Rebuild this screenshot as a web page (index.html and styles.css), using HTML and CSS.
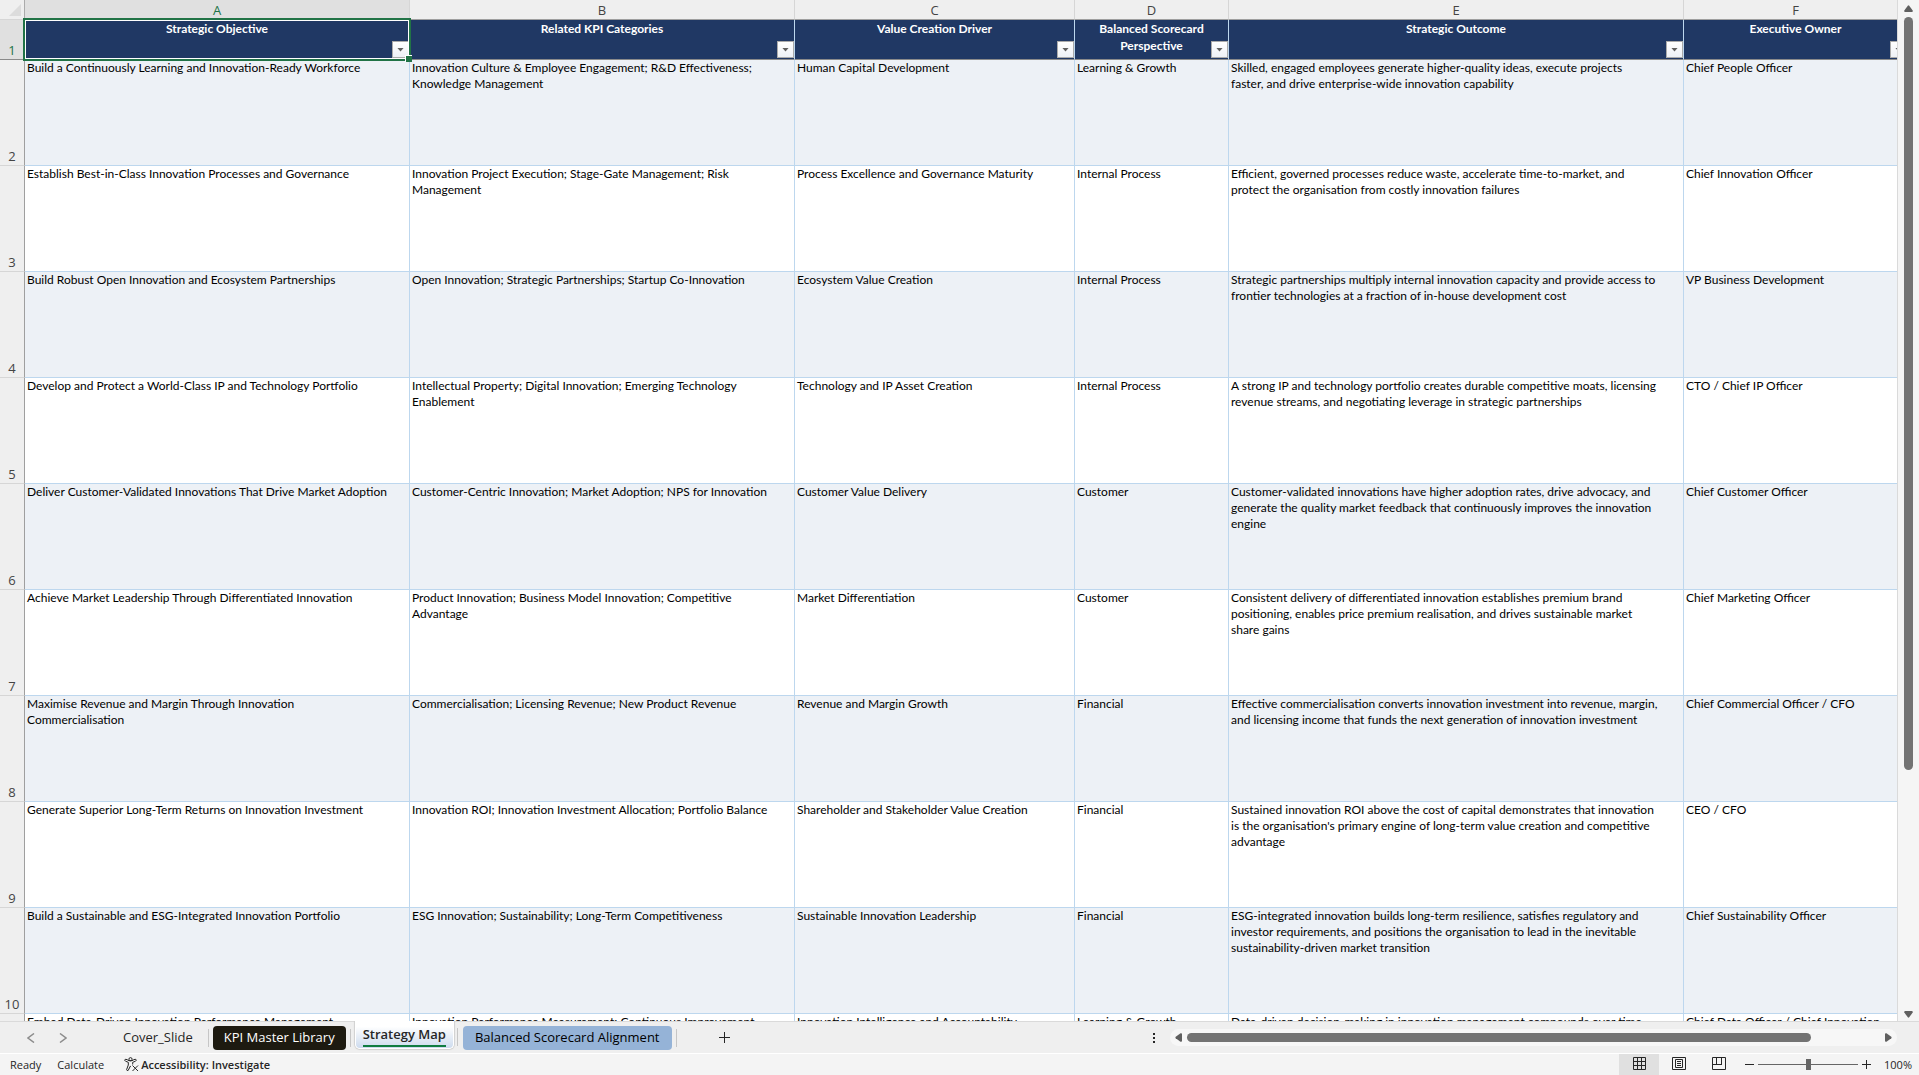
FILE: index.html
```html
<!DOCTYPE html>
<html lang="en">
<head>
<meta charset="utf-8">
<title>Strategy Map</title>
<link rel="stylesheet" href="styles.css">
</head>
<body>
<main class="workspace">
  <div class="sheet">
    <table class="grid">
      <colgroup>
        <col class="w-row"><col class="w-a"><col class="w-b"><col class="w-c"><col class="w-d"><col class="w-e"><col class="w-f">
      </colgroup>
      <thead>
        <tr class="letters">
          <th class="corner"><svg width="12" height="12" viewBox="0 0 12 12" aria-hidden="true"><path d="M12 0V12H0Z" fill="#dcdcdc"/></svg></th>
          <th class="current" scope="col">A</th><th scope="col">B</th><th scope="col">C</th><th scope="col">D</th><th scope="col">E</th><th scope="col">F</th>
        </tr>
        <tr class="titles">
          <th class="num current" scope="row">1</th>
          <th scope="col" class="selected">Strategic Objective<button class="filter" aria-label="Filter Strategic Objective"></button><span class="selection"></span></th>
          <th scope="col">Related KPI Categories<button class="filter" aria-label="Filter Related KPI Categories"></button></th>
          <th scope="col">Value Creation Driver<button class="filter" aria-label="Filter Value Creation Driver"></button></th>
          <th scope="col">Balanced Scorecard<br>Perspective<button class="filter" aria-label="Filter Balanced Scorecard Perspective"></button></th>
          <th scope="col">Strategic Outcome<button class="filter" aria-label="Filter Strategic Outcome"></button></th>
          <th scope="col">Executive Owner<button class="filter" aria-label="Filter Executive Owner"></button></th>
        </tr>
      </thead>
      <tbody>
        <tr>
          <th class="num" scope="row">2</th>
          <td>Build a Continuously Learning and Innovation-Ready Workforce</td>
          <td>Innovation Culture &amp; Employee Engagement; R&amp;D Effectiveness;<br>Knowledge Management</td>
          <td>Human Capital Development</td>
          <td>Learning &amp; Growth</td>
          <td>Skilled, engaged employees generate higher-quality ideas, execute projects<br>faster, and drive enterprise-wide innovation capability</td>
          <td>Chief People Officer</td>
        </tr>
        <tr>
          <th class="num" scope="row">3</th>
          <td>Establish Best-in-Class Innovation Processes and Governance</td>
          <td>Innovation Project Execution; Stage-Gate Management; Risk<br>Management</td>
          <td>Process Excellence and Governance Maturity</td>
          <td>Internal Process</td>
          <td>Efficient, governed processes reduce waste, accelerate time-to-market, and<br>protect the organisation from costly innovation failures</td>
          <td>Chief Innovation Officer</td>
        </tr>
        <tr>
          <th class="num" scope="row">4</th>
          <td>Build Robust Open Innovation and Ecosystem Partnerships</td>
          <td>Open Innovation; Strategic Partnerships; Startup Co-Innovation</td>
          <td>Ecosystem Value Creation</td>
          <td>Internal Process</td>
          <td>Strategic partnerships multiply internal innovation capacity and provide access to<br>frontier technologies at a fraction of in-house development cost</td>
          <td>VP Business Development</td>
        </tr>
        <tr>
          <th class="num" scope="row">5</th>
          <td>Develop and Protect a World-Class IP and Technology Portfolio</td>
          <td>Intellectual Property; Digital Innovation; Emerging Technology<br>Enablement</td>
          <td>Technology and IP Asset Creation</td>
          <td>Internal Process</td>
          <td>A strong IP and technology portfolio creates durable competitive moats, licensing<br>revenue streams, and negotiating leverage in strategic partnerships</td>
          <td>CTO / Chief IP Officer</td>
        </tr>
        <tr>
          <th class="num" scope="row">6</th>
          <td>Deliver Customer-Validated Innovations That Drive Market Adoption</td>
          <td>Customer-Centric Innovation; Market Adoption; NPS for Innovation</td>
          <td>Customer Value Delivery</td>
          <td>Customer</td>
          <td>Customer-validated innovations have higher adoption rates, drive advocacy, and<br>generate the quality market feedback that continuously improves the innovation<br>engine</td>
          <td>Chief Customer Officer</td>
        </tr>
        <tr>
          <th class="num" scope="row">7</th>
          <td>Achieve Market Leadership Through Differentiated Innovation</td>
          <td>Product Innovation; Business Model Innovation; Competitive<br>Advantage</td>
          <td>Market Differentiation</td>
          <td>Customer</td>
          <td>Consistent delivery of differentiated innovation establishes premium brand<br>positioning, enables price premium realisation, and drives sustainable market<br>share gains</td>
          <td>Chief Marketing Officer</td>
        </tr>
        <tr>
          <th class="num" scope="row">8</th>
          <td>Maximise Revenue and Margin Through Innovation<br>Commercialisation</td>
          <td>Commercialisation; Licensing Revenue; New Product Revenue</td>
          <td>Revenue and Margin Growth</td>
          <td>Financial</td>
          <td>Effective commercialisation converts innovation investment into revenue, margin,<br>and licensing income that funds the next generation of innovation investment</td>
          <td>Chief Commercial Officer / CFO</td>
        </tr>
        <tr>
          <th class="num" scope="row">9</th>
          <td>Generate Superior Long-Term Returns on Innovation Investment</td>
          <td>Innovation ROI; Innovation Investment Allocation; Portfolio Balance</td>
          <td>Shareholder and Stakeholder Value Creation</td>
          <td>Financial</td>
          <td>Sustained innovation ROI above the cost of capital demonstrates that innovation<br>is the organisation's primary engine of long-term value creation and competitive<br>advantage</td>
          <td>CEO / CFO</td>
        </tr>
        <tr>
          <th class="num" scope="row">10</th>
          <td>Build a Sustainable and ESG-Integrated Innovation Portfolio</td>
          <td>ESG Innovation; Sustainability; Long-Term Competitiveness</td>
          <td>Sustainable Innovation Leadership</td>
          <td>Financial</td>
          <td>ESG-integrated innovation builds long-term resilience, satisfies regulatory and<br>investor requirements, and positions the organisation to lead in the inevitable<br>sustainability-driven market transition</td>
          <td>Chief Sustainability Officer</td>
        </tr>
        <tr>
          <th class="num" scope="row">11</th>
          <td>Embed Data-Driven Innovation Performance Management</td>
          <td>Innovation Performance Measurement; Continuous Improvement</td>
          <td>Innovation Intelligence and Accountability</td>
          <td>Learning &amp; Growth</td>
          <td>Data-driven decision-making in innovation management compounds over time</td>
          <td>Chief Data Officer / Chief Innovation<br>Officer</td>
        </tr>
      </tbody>
    </table>
  </div>
  <div class="vscroll">
    <button class="arrow" aria-label="Scroll up"><svg width="9" height="7" viewBox="0 0 9 7"><path d="M3.8.7Q4.500 0 5.200.7L8.700 5.500Q9 7 8 7H1Q0 7 .3 5.500Z"/></svg></button>
    <div class="vtrack"><div class="vthumb"></div></div>
    <button class="arrow down" aria-label="Scroll down"><svg width="9" height="7" viewBox="0 0 9 7"><path d="M3.8 6.300Q4.500 7 5.200 6.300L8.700 1.500Q9 0 8 0H1Q0 0 .3 1.500Z"/></svg></button>
  </div>
</main>

<nav class="tabbar" aria-label="Sheets">
  <div class="tabs">
    <div class="tab-nav">
      <button aria-label="Previous sheet"><svg width="8" height="10" viewBox="0 0 8 10"><path d="M7 .5L1 5L7 9.500"/></svg></button>
      <button aria-label="Next sheet"><svg width="8" height="10" viewBox="0 0 8 10"><path d="M1 .5L7 5L1 9.500"/></svg></button>
    </div>
    <button class="tab">Cover_Slide</button>
    <button class="tab dark">KPI Master Library</button>
    <button class="tab active"><span>Strategy Map</span></button>
    <button class="tab blue">Balanced Scorecard Alignment</button>
    <button class="add" aria-label="New sheet"><svg width="11" height="11" viewBox="0 0 11 11"><path d="M5.500 0V11M0 5.500H11"/></svg></button>
  </div>
  <div class="hscroll">
    <svg class="dots" width="2" height="10" viewBox="0 0 2 10" aria-hidden="true"><path d="M0 0h2v2H0zM0 4h2v2H0zM0 8h2v2H0z"/></svg>
    <div class="hbar">
      <button class="arrow" aria-label="Scroll left"><svg width="7" height="9" viewBox="0 0 7 9"><path d="M.7 3.800Q0 4.500.7 5.200L5.500 8.700Q7 9 7 8V1Q7 0 5.500.3Z"/></svg></button>
      <div class="htrack"><div class="hthumb"></div></div>
      <button class="arrow" aria-label="Scroll right"><svg width="7" height="9" viewBox="0 0 7 9"><path d="M6.300 3.800Q7 4.500 6.300 5.200L1.500 8.700Q0 9 0 8V1Q0 0 1.500.3Z"/></svg></button>
    </div>
  </div>
</nav>

<footer class="status">
  <span class="ready">Ready</span>
  <span class="calc">Calculate</span>
  <button class="access">
    <svg width="15" height="15" viewBox="0 0 15 15" aria-hidden="true"><circle cx="6.500" cy="2.200" r="1.600"/><path d="M3.300 2.600L1.200 2.300Q.2 3.500 1.500 4.200L4.300 5.300V8L2.600 12.600Q2.800 14 4.200 13.400L6.300 9.200L7 9.800M9.700 2.600L11.800 2.300Q12.800 3.500 11.500 4.200L8.700 5.300V7.500M3.300 2.800L5 3.700H8L9.700 2.800M8.500 8.500L14 14M14 8.500L8.500 14"/></svg>
    Accessibility: Investigate
  </button>
  <div class="views">
    <button class="on" aria-label="Normal view"><svg width="13" height="13" viewBox="0 0 13 13"><path d="M.5.5H12.500V12.500H.5ZM4.500 0V13M8.500 0V13M0 4.500H13M0 8.500H13"/></svg></button>
    <button aria-label="Page layout"><svg width="14" height="13" viewBox="0 0 14 13"><path d="M.5.5H13.500V12.500H.5ZM3.500 2.500H10.500V10.500H3.500ZM5 4.500H9M5 6.500H9M5 8.500H9"/></svg></button>
    <button aria-label="Page break preview"><svg width="14" height="13" viewBox="0 0 14 13"><path d="M.5.5H13.500V12.500H.5ZM4.500 0V7.500M9.500 0V7.500M0 7.500H10"/></svg></button>
  </div>
  <div class="zoom">
    <button aria-label="Zoom out"><svg width="9" height="9" viewBox="0 0 9 9"><path d="M0 4.500H9"/></svg></button>
    <input type="range" min="0" max="100" value="50" aria-label="Zoom">
    <button aria-label="Zoom in"><svg width="9" height="9" viewBox="0 0 9 9"><path d="M0 4.500H9M4.500 0V9"/></svg></button>
    <span class="pct">100%</span>
  </div>
</footer>
</body>
</html>
```
FILE: styles.css
```css
* { box-sizing: border-box; }

body {
  margin: 0;
  height: 100vh;
  display: flex;
  flex-direction: column;
  overflow: hidden;
  background: #efefef;
  font-family: "Open Sans", sans-serif;
  color: #262626;
}

button {
  margin: 0;
  padding: 0;
  border: 0;
  background: none;
  font: inherit;
  color: inherit;
}

svg { display: block; }

/* Worksheet */
.workspace {
  flex: 1;
  min-height: 0;
  display: flex;
}

.sheet {
  flex: 1;
  min-width: 0;
  overflow: hidden;
  background: #fff;
}

.grid {
  width: 1908px;
  table-layout: fixed;
  border-collapse: separate;
  border-spacing: 0;
}

.w-row { width: 25px; }
.w-a, .w-b { width: 385px; }
.w-c { width: 280px; }
.w-d { width: 154px; }
.w-e { width: 455px; }
.w-f { width: 224px; }

.letters th {
  height: 20px;
  padding: 1px 0 0;
  border-right: 1px solid #d6d6d6;
  border-bottom: 1px solid #9f9f9f;
  background: #efefef;
  color: #444;
  font-size: 13px;
  font-weight: 400;
  line-height: 18px;
}

.letters .corner {
  padding: 0 0 3px 9px;
  vertical-align: bottom;
  border-right-color: #ababab;
  border-bottom-color: #d6d6d6;
}

.letters .current,
.grid .num.current {
  background: #e0e0e0;
  color: #217346;
}

.grid .num {
  padding: 0;
  border-right: 1px solid #9f9f9f;
  border-bottom: 1px solid #d6d6d6;
  background: #efefef;
  color: #444;
  font-family: "Open Sans", sans-serif;
  font-size: 13px;
  font-weight: 400;
  line-height: 17px;
  text-align: center;
  vertical-align: bottom;
}

.grid .num.current { border-bottom-color: #8a8a8a; }

.titles th {
  position: relative;
  height: 40px;
  padding: 0;
  border-right: 1px solid #bdd7ee;
  border-bottom: 1px solid #8a8a8a;
  background: #203864;
  color: #fff;
  font-family: Lato, sans-serif;
  font-size: 12px;
  font-weight: 700;
  line-height: 17px;
  vertical-align: top;
}

.filter {
  position: absolute;
  right: 0;
  bottom: 1px;
  display: grid;
  place-items: center;
  width: 17px;
  height: 17px;
  border: 1px solid #ababab;
  background: linear-gradient(#fff, #eef1f6);
}

.filter::after {
  content: "";
  width: 7px;
  height: 4px;
  background: #606060;
  clip-path: polygon(0 0, 100% 0, 50% 100%);
}

.selection {
  position: absolute;
  inset: -2px;
  z-index: 1;
  border: 2px solid #217346;
  box-shadow: inset 0 0 0 1px #fff;
  pointer-events: none;
}

.selection::after {
  content: "";
  position: absolute;
  right: -3px;
  bottom: -3px;
  width: 6px;
  height: 6px;
  border: solid #fff;
  border-width: 1px 0 0 1px;
  background: #217346;
}

.grid td {
  height: 106px;
  padding: 0 0 0 2px;
  border-right: 1px solid #bdd7ee;
  border-bottom: 1px solid #bdd7ee;
  background: #fff;
  color: #000;
  font-family: Lato, sans-serif;
  font-size: 12px;
  line-height: 16px;
  white-space: nowrap;
  vertical-align: top;
}

.grid tbody tr:nth-child(odd) td { background: #edf1f6; }

/* Scroll bars */
.vscroll {
  flex: 0 0 22px;
  display: flex;
  flex-direction: column;
  align-items: center;
  border-left: 1px solid #dadada;
  background: #f5f5f5;
}

.arrow {
  display: grid;
  place-items: center;
  flex: 0 0 17px;
  fill: #606060;
}

.arrow.down { flex-basis: 13px; }

.vtrack { flex: 1; width: 9px; }

.vthumb {
  height: 76%;
  border-radius: 5px;
  background: #737373;
}

.hscroll {
  flex: 0 0 40%;
  display: flex;
  align-items: center;
  gap: 15px;
  padding: 0 22px 0 2px;
}

.dots { fill: #262626; }

.hbar {
  flex: 1;
  display: flex;
  align-items: center;
  height: 17px;
  border-radius: 9px;
  background: #f7f7f7;
}

.htrack { flex: 1; height: 9px; }

.hthumb {
  width: 90%;
  height: 9px;
  border-radius: 5px;
  background: #737373;
}

/* Sheet tabs */
.tabbar {
  flex: 0 0 33px;
  display: flex;
  border-top: 1px solid #dadada;
  border-bottom: 1px solid #fff;
  background: #efefef;
}

.tabs {
  flex: 1;
  display: flex;
  align-items: center;
}

.tab-nav {
  display: flex;
  gap: 24px;
  width: 112px;
  padding-left: 27px;
  stroke: #8c8c8c;
  stroke-width: 1.500;
  fill: none;
}

.tab {
  position: relative;
  height: 24px;
  margin-right: 9px;
  padding: 0 11px 2px;
  border-radius: 4px;
  font-size: 13px;
  line-height: 22px;
  white-space: nowrap;
}

.tab::after {
  content: "";
  position: absolute;
  top: 3px;
  right: -5px;
  width: 1px;
  height: 18px;
  background: #c6c6c6;
}

.tab.dark { background: #1d1a10; color: #fff; }
.tab.blue { padding: 0 12px 2px; background: #95b3d7; color: #000; }

.tab.active {
  align-self: flex-start;
  height: 28px;
  margin-top: -1px;
  padding: 1px 7px 0;
  border: solid #fff;
  border-width: 0 1px 1px;
  border-radius: 0 0 5px 5px;
  background: linear-gradient(#fff 20%, #cddbee);
  box-shadow: 0 0 1px 1px #d0d0d0;
  clip-path: inset(0 -8px -2px -2px);
  font-weight: 600;
}

.tab.active::after { top: 7px; }

.tab.active span {
  display: block;
  height: 24px;
  border-bottom: 2px solid #107c41;
}

.add {
  margin-left: 38px;
  stroke: #262626;
}

/* Status bar */
.status {
  flex: 0 0 21px;
  display: flex;
  align-items: center;
  background: #f4f4f4;
  font-size: 11px;
  line-height: 18px;
}

.ready { padding-left: 10px; }
.calc { padding-left: 16px; }

.access {
  display: flex;
  align-items: center;
  gap: 2px;
  padding-left: 20px;
  font-weight: 600;
}

.access svg {
  stroke: #262626;
  fill: none;
}

.views {
  display: flex;
  align-self: stretch;
  margin-left: auto;
}

.views button {
  display: grid;
  place-items: start center;
  width: 40px;
  padding-top: 3px;
  stroke: #262626;
  fill: none;
}

.views .on { background: #e0e0e0; }

.zoom {
  display: flex;
  align-items: center;
  gap: 4px;
  padding: 0 7px 0 6px;
  stroke: #262626;
}

.zoom input {
  appearance: none;
  width: 100px;
  height: 11px;
  margin: 0;
  background: linear-gradient(#666, #666) center / 100% 1px no-repeat;
}

.zoom input::-webkit-slider-thumb {
  appearance: none;
  width: 5px;
  height: 11px;
  background: #666;
}

.pct {
  width: 37px;
  stroke: none;
  text-align: right;
  white-space: nowrap;
}
```
